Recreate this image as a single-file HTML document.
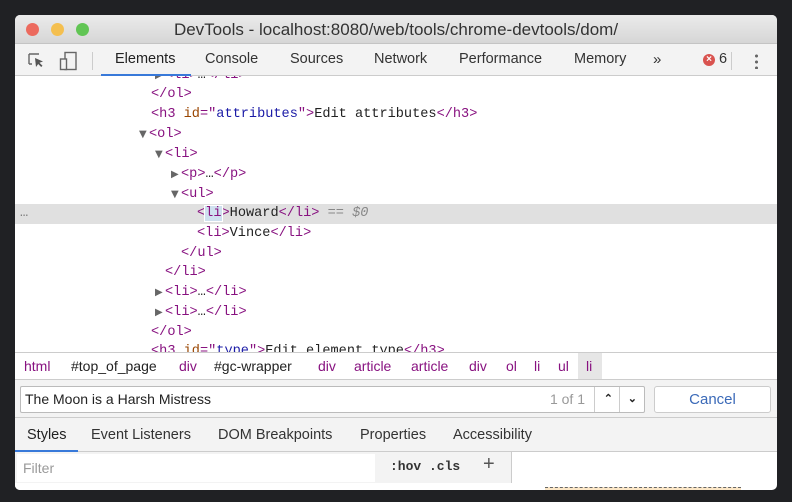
<!DOCTYPE html>
<html><head><style>
*{margin:0;padding:0;box-sizing:border-box}
body{width:792px;height:502px;background:#202124;position:relative;overflow:hidden;font-family:"Liberation Sans",sans-serif}
.win{position:absolute;left:15px;top:15px;width:762px;height:475px;background:#fff;border-radius:5px;overflow:hidden}
.title{height:29px;background:linear-gradient(#ebebeb,#d6d6d6);border-bottom:1px solid #c4c4c4;text-align:center;font-size:17px;line-height:29px;color:#333}
.dot{position:absolute;top:8px;width:13px;height:13px;border-radius:50%}
.tb{position:absolute;top:29px;left:0;width:762px;height:32px;background:#f3f3f3;border-bottom:1px solid #ccc;font-size:14.5px;color:#333}
.tb span{position:absolute;top:7px}
.code{position:absolute;top:61px;left:0;width:762px;height:276px;font-family:"Liberation Mono",monospace;font-size:13.6px;color:#222;overflow:hidden}
.r{position:absolute;left:0;width:762px;height:20px;line-height:20px;white-space:pre}
.t{color:#881280}.a{color:#994500}.v{color:#1a1aa6}
.tri{position:absolute;font-size:10px;color:#666;font-family:"DejaVu Sans",sans-serif}
.bc{position:absolute;top:337px;left:0;width:762px;height:28px;border-top:1px solid #ccc;border-bottom:1px solid #ccc;font-size:14px;color:#222;line-height:27px}
.bc span{position:absolute}
.sr{position:absolute;top:365px;height:38px;width:762px;background:#f3f3f3;border-bottom:1px solid #ccc}
.tabs{position:absolute;top:403px;width:762px;height:34px;background:#f3f3f3;border-bottom:1px solid #ccc;font-size:14.5px;color:#333}
.tabs span{position:absolute;top:9px}
</style></head><body>
<div class="win">
<div class="title"><div class="dot" style="left:11px;background:#ec6a5e"></div><div class="dot" style="left:36px;background:#f4bf4f"></div><div class="dot" style="left:61px;background:#61c554"></div>DevTools - localhost:8080/web/tools/chrome-devtools/dom/</div>
<div class="tb">
<svg style="position:absolute;left:12px;top:8px" width="18" height="18" viewBox="0 0 18 18"><path d="M2 2h10M2 2v10M2 12h3" stroke="#666" stroke-width="1.4" fill="none"/><path d="M8 6l8 3.5-3.5 1.2 3 3-1.3 1.3-3-3L9 15z" fill="#555"/></svg>
<svg style="position:absolute;left:44px;top:7px" width="20" height="20" viewBox="0 0 20 20"><rect x="6" y="1.5" width="11" height="17" fill="none" stroke="#666" stroke-width="1.4"/><rect x="1.5" y="8" width="6" height="10.5" fill="#f3f3f3" stroke="#666" stroke-width="1.4"/></svg>
<div style="position:absolute;left:77px;top:8px;width:1px;height:18px;background:#ccc"></div>
<span style="left:100px;color:#222">Elements</span>
<div style="position:absolute;left:86px;top:30px;width:90px;height:2px;background:#3879d9"></div>
<span style="left:190px">Console</span><span style="left:275px">Sources</span><span style="left:359px">Network</span><span style="left:444px">Performance</span><span style="left:559px">Memory</span><span style="left:638px;font-size:15px">»</span>
<div style="position:absolute;left:688px;top:10px;width:12px;height:12px;border-radius:50%;background:#d9534f;color:#fff;font-size:10px;line-height:12px;text-align:center;font-weight:bold">×</div>
<span style="left:704px">6</span>
<div style="position:absolute;left:716px;top:8px;width:1px;height:18px;background:#ccc"></div>
<div style="position:absolute;left:740px;top:9px;width:3px;height:16px;background:radial-gradient(circle,#666 1.4px,transparent 1.6px) 0 0/3px 6px"></div>
</div>
<div class="code">
<div class="r" style="top:-10px"><span class="tri" style="left:140px">▶</span><span style="position:absolute;left:150px"><span class="t">&lt;li&gt;</span>…<span class="t">&lt;/li&gt;</span></span></div>
<div class="r" style="top:9px;left:136px"><span class="t">&lt;/ol&gt;</span></div>
<div class="r" style="top:29px;left:136px"><span class="t">&lt;h3 </span><span class="a">id</span><span class="t">="</span><span class="v">attributes</span><span class="t">"&gt;</span>Edit attributes<span class="t">&lt;/h3&gt;</span></div>
<div class="r" style="top:49px"><span class="tri" style="left:124px">▼</span><span style="position:absolute;left:134px" class="t">&lt;ol&gt;</span></div>
<div class="r" style="top:69px"><span class="tri" style="left:140px">▼</span><span style="position:absolute;left:150px" class="t">&lt;li&gt;</span></div>
<div class="r" style="top:89px"><span class="tri" style="left:156px">▶</span><span style="position:absolute;left:166px"><span class="t">&lt;p&gt;</span>…<span class="t">&lt;/p&gt;</span></span></div>
<div class="r" style="top:109px"><span class="tri" style="left:156px">▼</span><span style="position:absolute;left:166px" class="t">&lt;ul&gt;</span></div>
<div class="r" style="top:128px;background:#e0e0e0"><span style="position:absolute;left:5px;color:#777">…</span><span style="position:absolute;left:182px"><span class="t">&lt;<span style="background:#cfe0ef;outline:1px solid #fff">li</span>&gt;</span>Howard<span class="t">&lt;/li&gt;</span><span style="color:#888"> == <i>$0</i></span></span></div>
<div class="r" style="top:148px;left:182px"><span class="t">&lt;li&gt;</span>Vince<span class="t">&lt;/li&gt;</span></div>
<div class="r" style="top:168px;left:166px"><span class="t">&lt;/ul&gt;</span></div>
<div class="r" style="top:187px;left:150px"><span class="t">&lt;/li&gt;</span></div>
<div class="r" style="top:207px"><span class="tri" style="left:140px">▶</span><span style="position:absolute;left:150px"><span class="t">&lt;li&gt;</span>…<span class="t">&lt;/li&gt;</span></span></div>
<div class="r" style="top:227px"><span class="tri" style="left:140px">▶</span><span style="position:absolute;left:150px"><span class="t">&lt;li&gt;</span>…<span class="t">&lt;/li&gt;</span></span></div>
<div class="r" style="top:247px;left:136px"><span class="t">&lt;/ol&gt;</span></div>
<div class="r" style="top:266px;left:136px"><span class="t">&lt;h3 </span><span class="a">id</span><span class="t">="</span><span class="v">type</span><span class="t">"&gt;</span>Edit element type<span class="t">&lt;/h3&gt;</span></div>
</div>
<div class="bc">
<span style="left:9px;color:#881280">html</span><span style="left:56px">#top_of_page</span><span style="left:164px;color:#881280">div</span><span style="left:199px">#gc-wrapper</span><span style="left:303px;color:#881280">div</span><span style="left:339px;color:#881280">article</span><span style="left:396px;color:#881280">article</span><span style="left:454px;color:#881280">div</span><span style="left:491px;color:#881280">ol</span><span style="left:519px;color:#881280">li</span><span style="left:543px;color:#881280">ul</span><span style="left:563px;width:24px;height:26px;background:#e6e6e6"></span><span style="left:571px;color:#881280">li</span>
</div>
<div class="sr">
<div style="position:absolute;left:5px;top:6px;width:625px;height:27px;background:#fff;border:1px solid #bbb;border-radius:2px;font-size:14px;line-height:25px;padding-left:4px;color:#222">The Moon is a Harsh Mistress<span style="position:absolute;right:59px;color:#999">1 of 1</span>
<div style="position:absolute;right:49px;top:0;width:1px;height:25px;background:#ccc"></div><div style="position:absolute;right:24px;top:0;width:1px;height:25px;background:#ccc"></div>
<span style="position:absolute;right:31px;font-size:11px;font-weight:bold">⌃</span><span style="position:absolute;right:7px;font-size:11px;font-weight:bold">⌄</span></div>
<div style="position:absolute;left:639px;top:6px;width:117px;height:27px;background:#fff;border:1px solid #ccc;border-radius:3px;text-align:center;line-height:25px;font-size:15px;color:#3b6ab8">Cancel</div>
</div>
<div class="tabs">
<span style="left:12px;color:#222">Styles</span><div style="position:absolute;left:0;top:32px;width:63px;height:2px;background:#3879d9"></div>
<span style="left:76px">Event Listeners</span><span style="left:203px">DOM Breakpoints</span><span style="left:345px">Properties</span><span style="left:438px">Accessibility</span>
</div>
<div style="position:absolute;top:437px;left:0;width:497px;height:38px;background:#f3f3f3;border-right:1px solid #ccc"></div>
<div style="position:absolute;top:439px;left:2px;width:358px;height:28px;background:#fff;font-size:14px;color:#999;line-height:28px;padding-left:6px">Filter</div>
<div style="position:absolute;top:444px;left:375px;font-family:'Liberation Mono',monospace;font-size:13px;font-weight:bold;color:#333">:hov .cls</div>
<div style="position:absolute;top:438px;left:468px;font-size:20px;color:#555">+</div>
<div style="position:absolute;top:468px;left:0;width:497px;height:7px;background:#fff"></div>
<div style="position:absolute;top:472px;left:530px;width:196px;height:4px;border-top:1px dashed #666;background:#fbe6c6"></div>
</div>
</body></html>
